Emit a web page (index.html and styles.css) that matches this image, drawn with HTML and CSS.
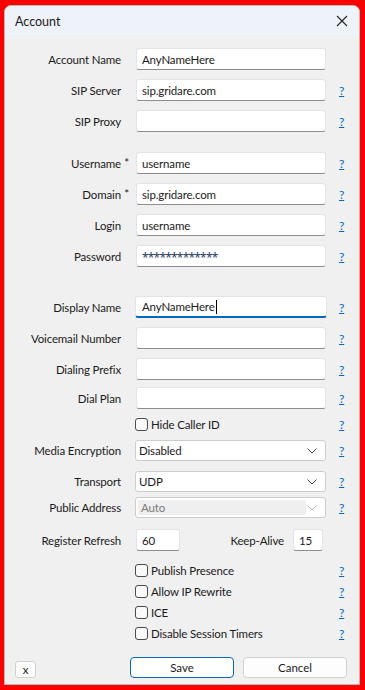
FILE: index.html
```html
<!DOCTYPE html>
<html lang="en">
<head>
    <meta charset="UTF-8">
    <title>Account</title>
    <link rel="stylesheet" href="styles.css">
</head>
<body>
    <div class="window">
        <div class="titlebar">
            <span class="title">Account</span>
            <svg class="close" width="12" height="12" viewBox="0 0 12 12">
                <path d="M1 1 L11 11 M11 1 L1 11" stroke="#222" stroke-width="1.1" fill="none"/>
            </svg>
        </div>

        <div class="content">
            <div class="row first">
                <label>Account Name</label>
                <input class="field" type="text" value="AnyNameHere">
                <span></span>
            </div>
            <div class="row">
                <label>SIP Server</label>
                <input class="field" type="text" value="sip.gridare.com">
                <a class="help" href="#">?</a>
            </div>
            <div class="row">
                <label>SIP Proxy</label>
                <input class="field" type="text" value="">
                <a class="help" href="#">?</a>
            </div>

            <div class="row group">
                <label>Username<span class="req">*</span></label>
                <input class="field" type="text" value="username">
                <a class="help" href="#">?</a>
            </div>
            <div class="row">
                <label>Domain<span class="req">*</span></label>
                <input class="field" type="text" value="sip.gridare.com">
                <a class="help" href="#">?</a>
            </div>
            <div class="row">
                <label>Login</label>
                <input class="field" type="text" value="username">
                <a class="help" href="#">?</a>
            </div>
            <div class="row">
                <label>Password</label>
                <input class="field password" type="text" value="*************">
                <a class="help" href="#">?</a>
            </div>

            <div class="row group-lg">
                <label>Display Name</label>
                <div class="field focused">AnyNameHere<span class="caret"></span></div>
                <a class="help" href="#">?</a>
            </div>
            <div class="row">
                <label>Voicemail Number</label>
                <input class="field" type="text" value="">
                <a class="help" href="#">?</a>
            </div>
            <div class="row">
                <label>Dialing Prefix</label>
                <input class="field" type="text" value="">
                <a class="help" href="#">?</a>
            </div>
            <div class="row tight">
                <label>Dial Plan</label>
                <input class="field" type="text" value="">
                <a class="help" href="#">?</a>
            </div>

            <div class="row check-row after-field">
                <span></span>
                <div class="check"><span class="box"></span>Hide Caller ID</div>
                <a class="help" href="#">?</a>
            </div>

            <div class="row select-row">
                <label>Media Encryption</label>
                <div class="select">Disabled
                    <svg class="chev" width="10" height="6" viewBox="0 0 10 6"><path d="M0.5 0.5 L5 5 L9.5 0.5" stroke="#444" fill="none"/></svg>
                </div>
                <a class="help" href="#">?</a>
            </div>
            <div class="row select-row spaced">
                <label>Transport</label>
                <div class="select">UDP
                    <svg class="chev" width="10" height="6" viewBox="0 0 10 6"><path d="M0.5 0.5 L5 5 L9.5 0.5" stroke="#444" fill="none"/></svg>
                </div>
                <a class="help" href="#">?</a>
            </div>
            <div class="row select-row">
                <label>Public Address</label>
                <div class="select disabled"><span class="inner">Auto</span>
                    <svg class="chev" width="10" height="6" viewBox="0 0 10 6"><path d="M0.5 0.5 L5 5 L9.5 0.5" stroke="#bbb" fill="none"/></svg>
                </div>
                <a class="help" href="#">?</a>
            </div>

            <div class="row refresh-row">
                <label>Register Refresh</label>
                <div class="refresh">
                    <input class="field small" type="text" value="60">
                    <span class="keep">Keep-Alive</span>
                    <input class="field tiny" type="text" value="15">
                </div>
                <span></span>
            </div>

            <div class="row check-row options">
                <span></span>
                <div class="check"><span class="box"></span>Publish Presence</div>
                <a class="help" href="#">?</a>
            </div>
            <div class="row check-row">
                <span></span>
                <div class="check"><span class="box"></span>Allow IP Rewrite</div>
                <a class="help" href="#">?</a>
            </div>
            <div class="row check-row">
                <span></span>
                <div class="check"><span class="box"></span>ICE</div>
                <a class="help" href="#">?</a>
            </div>
            <div class="row check-row">
                <span></span>
                <div class="check"><span class="box"></span>Disable Session Timers</div>
                <a class="help" href="#">?</a>
            </div>

            <div class="footer">
                <button class="btn-x">x</button>
                <button class="btn primary">Save</button>
                <button class="btn">Cancel</button>
            </div>
        </div>
    </div>
</body>
</html>
```

FILE: styles.css
```css
html, body {
    margin: 0;
    padding: 0;
    height: 100%;
}

body {
    background: #ff0000;
    font-family: 'Lato', sans-serif;
    font-size: 11.5px;
    letter-spacing: -0.15px;
    color: #1b1b1b;
}

.window {
    margin: 5px 0 0 4px;
    width: 354px;
    height: 678px;
    background: #f0f0f0;
    border: 1px solid #b9b9b9;
    border-radius: 7px 7px 0 0;
    overflow: hidden;
}

.titlebar {
    height: 31px;
    background: #eef3f9;
    display: flex;
    align-items: center;
    justify-content: space-between;
    padding: 0 11px 0 10px;
}

.title {
    font-size: 12.5px;
    letter-spacing: 0;
    color: #1a1a1a;
}

.close {
    margin-top: -1px;
}

.content {
    padding: 0 12px 0 10px;
}

.row {
    display: grid;
    grid-template-columns: 106px 190px 20px;
    column-gap: 15px;
    align-items: center;
    height: 22px;
    margin-top: 9px;
}

.row .help {
    margin-left: -2px;
}

.row.first {
    margin-top: 11px;
}

.row.group {
    margin-top: 20px;
}

.row.group-lg {
    margin-top: 29px;
}

.row.tight {
    margin-top: 7px;
}

label {
    display: flex;
    justify-content: flex-end;
    text-align: right;
    white-space: nowrap;
}

.req {
    margin-right: -8px;
    padding-left: 2px;
    width: 6px;
    position: relative;
    top: -1px;
}

.field {
    box-sizing: border-box;
    height: 22px;
    width: 190px;
    margin: 0;
    padding: 0 5px;
    font-family: 'Lato', sans-serif;
    font-size: 11.5px;
    letter-spacing: -0.15px;
    color: #1b1b1b;
    background: #fff;
    border: 1px solid #e3e3e3;
    border-bottom: 1px solid #8d8d8d;
    border-radius: 3px;
    outline: none;
    display: flex;
    align-items: center;
}

.field.password {
    color: #1f3a66;
    font-family: 'Noto Sans', sans-serif;
    font-size: 12px;
    letter-spacing: -0.8px;
    padding-top: 2px;
}

.field.focused {
    width: 192px;
    margin-left: -1px;
    padding-left: 6px;
    border-bottom: 2px solid #0067c0;
}

.caret {
    display: inline-block;
    width: 1px;
    height: 14px;
    background: #000;
    margin-left: 1px;
}

.help {
    color: #0066cc;
    text-decoration: underline;
    font-size: 12px;
}

.check-row {
    height: 21px;
    margin-top: 0;
}

.check-row.after-field {
    margin-top: 5px;
}

.check-row.options {
    margin-top: 9px;
}

.check {
    display: flex;
    align-items: center;
    margin-left: -1px;
}

.box {
    box-sizing: border-box;
    width: 13px;
    height: 13px;
    border: 1px solid #4a4a4a;
    border-radius: 3px;
    background: #f9f9f9;
    margin-right: 3px;
}

.select-row {
    height: 21px;
    margin-top: 5px;
}

.select-row.spaced {
    margin-top: 10px;
}

.select {
    box-sizing: border-box;
    height: 21px;
    width: 191px;
    margin-left: -1px;
    padding: 0 0 0 3px;
    background: #fff;
    border: 1px solid #cdcdcd;
    border-radius: 3px;
    display: flex;
    align-items: center;
    position: relative;
}

.select .chev {
    position: absolute;
    right: 8px;
    top: 7px;
}

.select.disabled {
    color: #7a7a7a;
    padding: 2px;
}

.select.disabled .inner {
    box-sizing: border-box;
    height: 15px;
    width: 168px;
    background: #efefef;
    padding-left: 3px;
    display: flex;
    align-items: center;
}

.refresh-row {
    margin-top: 11px;
}

.refresh {
    display: flex;
    align-items: center;
}

.field.small {
    width: 44px;
}

.keep {
    margin-left: auto;
    margin-right: 9px;
}

.field.tiny {
    width: 30px;
    margin-right: 3px;
}

.footer {
    display: flex;
    align-items: flex-end;
    margin-top: 13px;
}

button {
    font-family: 'Lato', sans-serif;
    font-size: 11.5px;
    color: #1b1b1b;
    background: #fdfdfd;
    border: 1px solid #d0d0d0;
    border-radius: 4px;
    padding: 0;
}

.btn {
    height: 21px;
    width: 104px;
}

.btn.primary {
    border-color: #0067c0;
    background: #fff;
    margin-left: auto;
    margin-right: 9px;
}

.btn-x {
    height: 17px;
    width: 21px;
    border-radius: 3px;
    line-height: 12px;
}
```
